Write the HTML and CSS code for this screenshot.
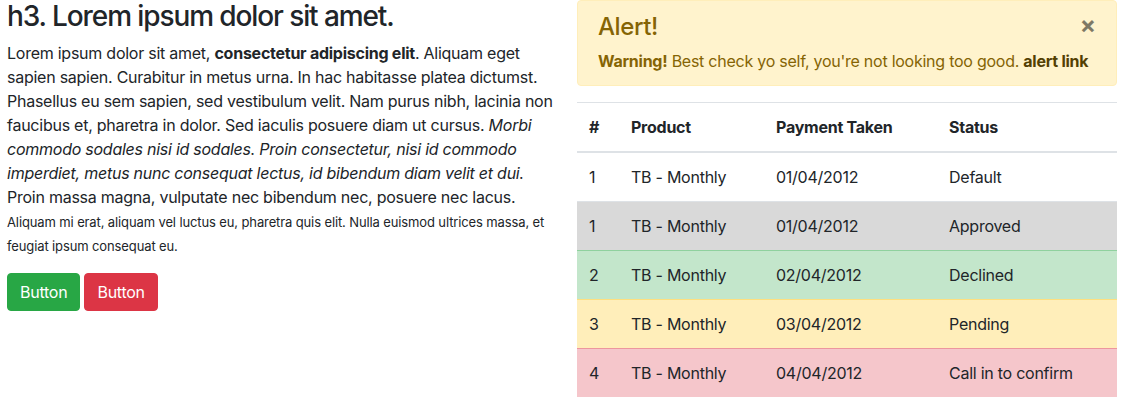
FILE: index.html
```html
<!DOCTYPE html>
<html>
<head>
<meta charset="utf-8">
<link rel="stylesheet" href="styles.css">
</head>
<body>
<div class="row">
  <div class="col-left">
    <h3 class="title">h3. Lorem ipsum dolor sit amet.</h3>
    <p class="lead-text">Lorem ipsum dolor sit amet, <strong>consectetur adipiscing elit</strong>. Aliquam eget sapien sapien. Curabitur in metus urna. In hac habitasse platea dictumst. Phasellus eu sem sapien, sed vestibulum velit. Nam purus nibh, lacinia non faucibus et, pharetra in dolor. Sed iaculis posuere diam ut cursus. <em>Morbi commodo sodales nisi id sodales. Proin consectetur, nisi id commodo imperdiet, metus nunc consequat lectus, id bibendum diam velit et dui.</em> Proin massa magna, vulputate nec bibendum nec, posuere nec lacus.<br><small>Aliquam mi erat, aliquam vel luctus eu, pharetra quis elit. Nulla euismod ultrices massa, et feugiat ipsum consequat eu.</small></p>
    <div class="buttons">
      <button class="btn btn-success">Button</button>
      <button class="btn btn-danger">Button</button>
    </div>
  </div>
  <div class="col-right">
    <div class="alert">
      <button class="close" type="button">×</button>
      <h4 class="alert-heading">Alert!</h4>
      <p class="alert-text"><strong>Warning!</strong> Best check yo self, you're not looking too good. <a class="alert-link" href="#">alert link</a></p>
    </div>
    <table class="table">
      <thead>
        <tr><th class="c1">#</th><th class="c2">Product</th><th class="c3">Payment Taken</th><th>Status</th></tr>
      </thead>
      <tbody>
        <tr><td>1</td><td>TB - Monthly</td><td>01/04/2012</td><td>Default</td></tr>
        <tr class="row-active"><td>1</td><td>TB - Monthly</td><td>01/04/2012</td><td>Approved</td></tr>
        <tr class="row-success"><td>2</td><td>TB - Monthly</td><td>02/04/2012</td><td>Declined</td></tr>
        <tr class="row-warning"><td>3</td><td>TB - Monthly</td><td>03/04/2012</td><td>Pending</td></tr>
        <tr class="row-danger"><td>4</td><td>TB - Monthly</td><td>04/04/2012</td><td>Call in to confirm</td></tr>
      </tbody>
    </table>
  </div>
</div>
</body>
</html>
```
FILE: styles.css
```css
* { box-sizing: border-box; }
html, body {
  margin: 0;
  padding: 0;
  background: #fff;
}
body {
  font-family: Inter, "Noto Sans", sans-serif;
  font-size: 16px;
  line-height: 1.5;
  color: #212529;
  letter-spacing: -0.25px;
}
.row {
  display: flex;
  padding: 0 6px 0 7px;
  gap: 17px;
}
.col-left {
  width: 553px;
  flex: none;
}
.col-right {
  flex: 1;
  min-width: 0;
}
.title {
  margin: 0 0 7px;
  font-size: 28px;
  font-weight: 500;
  line-height: 1.2;
  letter-spacing: -1.1px;
}
.lead-text {
  margin: 0 0 16px;
}
.lead-text small {
  font-size: 13px;
  letter-spacing: -0.12px;
}
.buttons {
  display: flex;
  gap: 4px;
}
.btn {
  font-family: inherit;
  font-size: 16px;
  line-height: 1.5;
  letter-spacing: -0.25px;
  padding: 6px 12px;
  border: 1px solid transparent;
  border-radius: 4px;
  color: #fff;
  cursor: pointer;
}
.btn-success { background: #28a745; border-color: #28a745; }
.btn-danger { background: #dc3545; border-color: #dc3545; }
.alert {
  position: relative;
  background: #fff3cd;
  border: 1px solid #ffeeba;
  color: #856404;
  border-radius: 4px;
  padding: 12px 20px;
  margin-bottom: 16px;
}
.alert-heading {
  margin: 0 0 7px;
  font-size: 24px;
  font-weight: 500;
  line-height: 1.2;
  letter-spacing: -0.4px;
}
.alert-text { margin: 0; }
.alert-text strong { font-weight: 700; }
.alert-link {
  color: #533f03;
  font-weight: 700;
  text-decoration: none;
}
.close {
  position: absolute;
  top: 0;
  right: 0;
  padding: 12px 20px;
  background: transparent;
  border: 0;
  font-family: inherit;
  font-size: 24px;
  font-weight: 700;
  line-height: 1;
  color: #000;
  opacity: 0.5;
}
.table {
  width: 100%;
  border-collapse: collapse;
}
.table th, .table td {
  padding: 12px;
  text-align: left;
  vertical-align: top;
  border-top: 1px solid #dee2e6;
}
.table th { font-weight: 700; border-bottom: 2px solid #dee2e6; }
.c1 { width: 42px; }
.c2 { width: 145px; }
.c3 { width: 173px; }
.row-active td { background: #d9d9d9; }
.row-success td { background: #c3e6cb; border-top-color: #8fd19e; }
.row-warning td { background: #ffeeba; border-top-color: #ffdf7e; }
.row-danger td { background: #f5c6cb; border-top-color: #ed969e; }
```
